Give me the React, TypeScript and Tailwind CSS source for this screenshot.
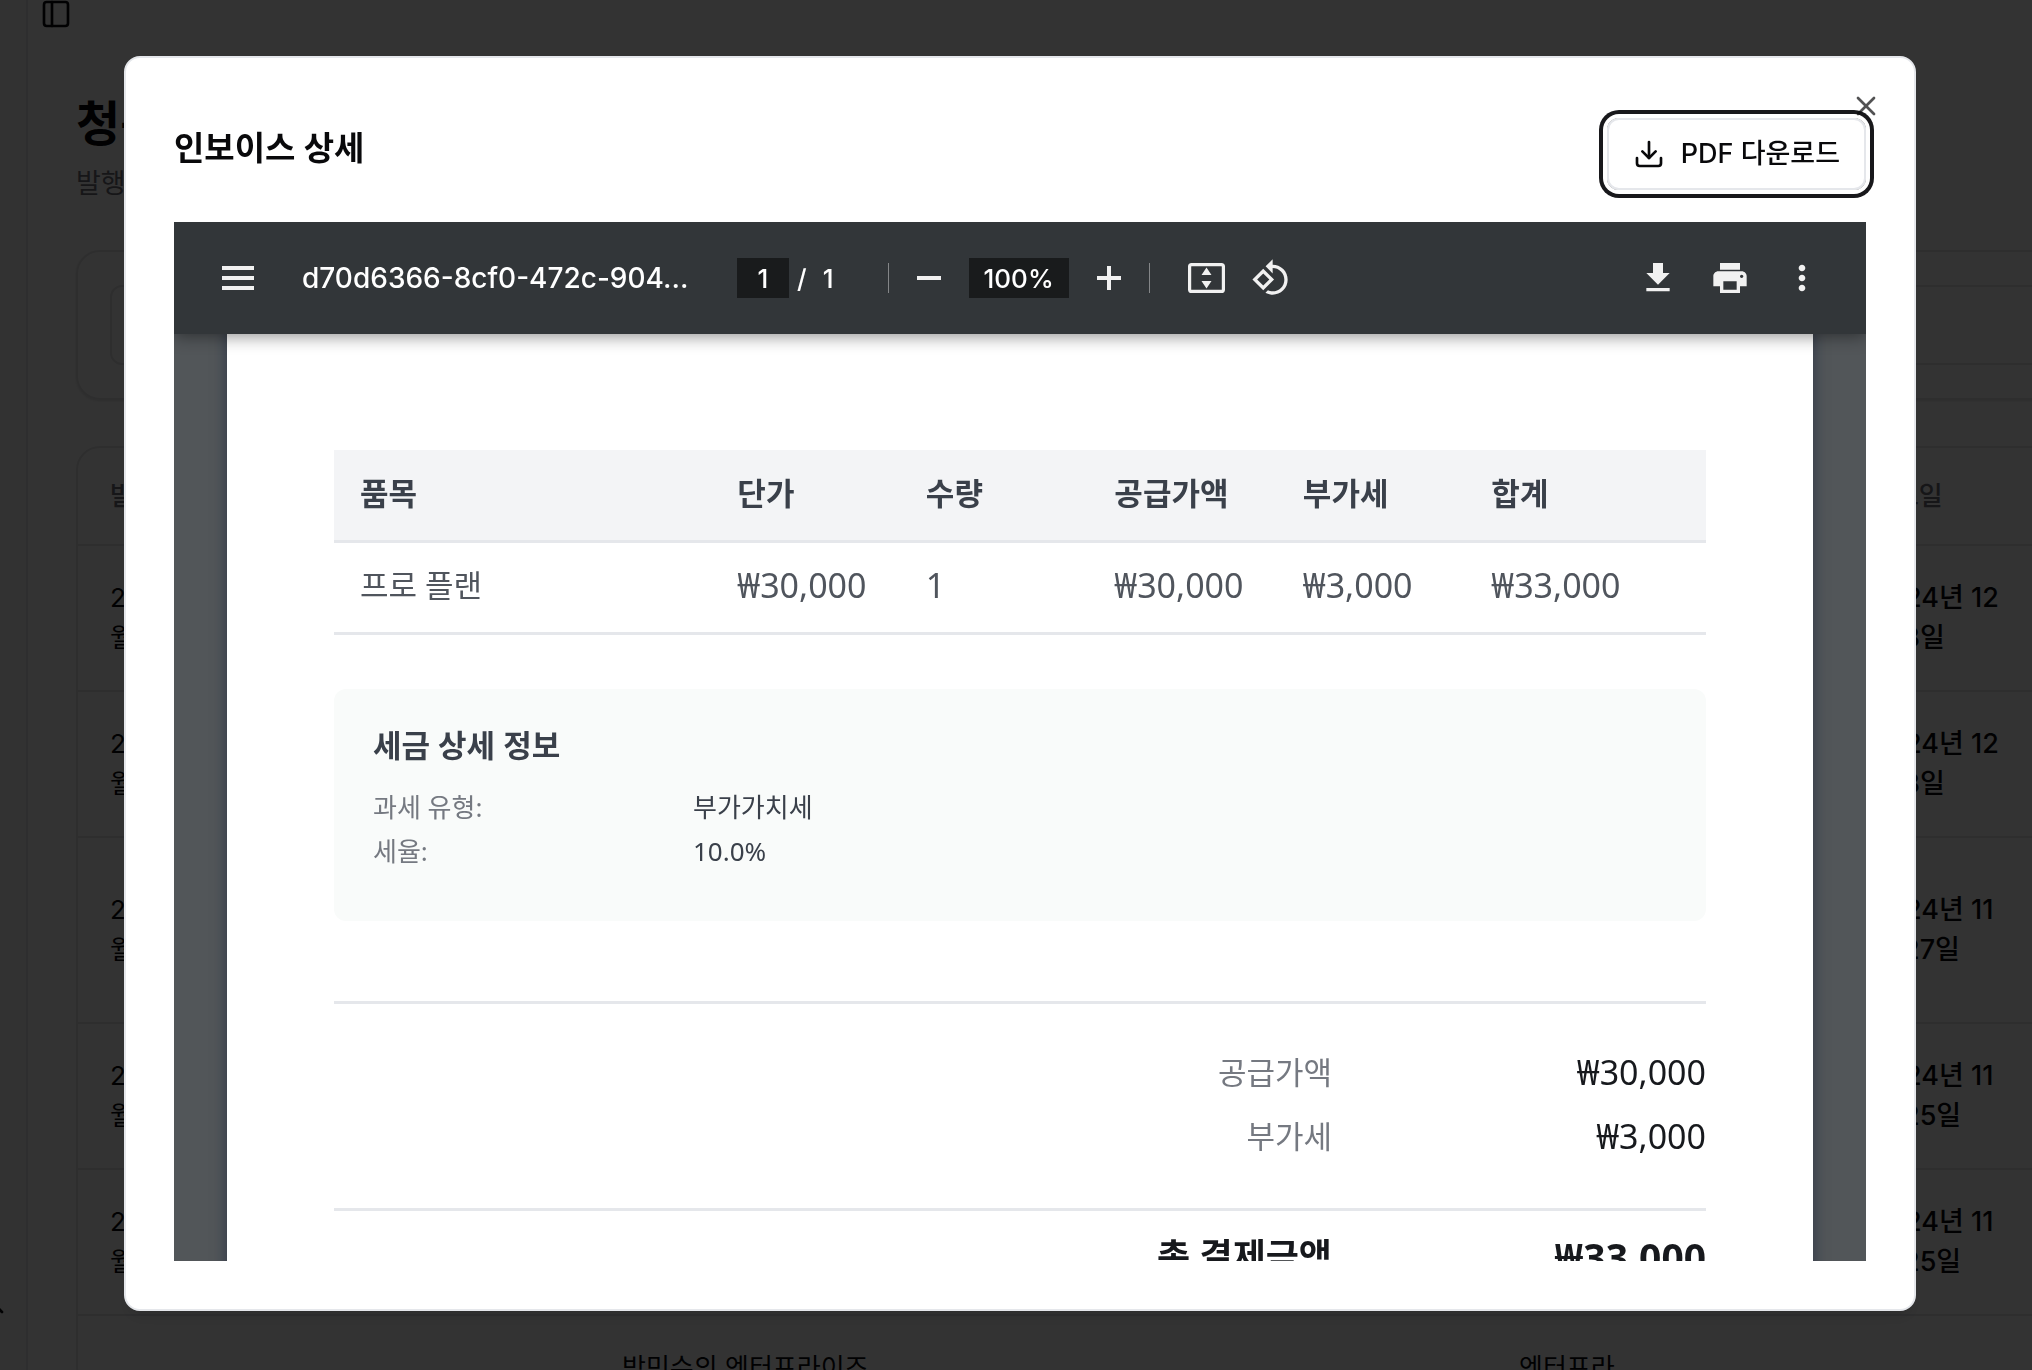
import { useState } from "react";
import { ChevronUp, Download, PanelLeft, X } from "lucide-react";

interface InvoiceRow {
  issuedAt: string;
  dueAt: string;
  tall?: boolean;
}

const invoices: InvoiceRow[] = [
  { issuedAt: "2024년 12월 3일", dueAt: "2024년 12월 3일" },
  { issuedAt: "2024년 12월 3일", dueAt: "2024년 12월 3일" },
  { issuedAt: "2024년 11월 27일", dueAt: "2024년 11월 27일", tall: true },
  { issuedAt: "2024년 11월 25일", dueAt: "2024년 11월 25일" },
  { issuedAt: "2024년 11월 25일", dueAt: "2024년 11월 25일" },
];

const itemColumns = ["단가", "수량", "공급가액", "부가세", "합계"];
const itemValues = ["₩30,000", "1", "₩30,000", "₩3,000", "₩33,000"];

const taxDetails = [
  { label: "과세 유형:", value: "부가가치세" },
  { label: "세율:", value: "10.0%" },
];

const totals = [
  { label: "공급가액", value: "₩30,000" },
  { label: "부가세", value: "₩3,000" },
];

function BillingPage() {
  return (
    <div className="flex h-screen overflow-hidden bg-white font-['Inter','Noto_Sans_CJK_KR',sans-serif] text-zinc-950">
      <aside className="flex w-7 shrink-0 items-end justify-end overflow-hidden border-r-2 border-gray-200 bg-zinc-50 pr-4 pb-[46px]">
        <ChevronUp className="size-8 shrink-0" />
      </aside>
      <main className="min-w-0 flex-1">
        <header className="flex h-7 items-center pl-3">
          <button type="button" aria-label="사이드바 열기">
            <PanelLeft className="size-8" />
          </button>
        </header>

        <div className="-mr-20 pt-[60px] pl-12">
          <h1 className="text-[48px] leading-[72px] font-bold">청구서</h1>
          <p className="mt-1 text-[27px] leading-10 text-zinc-500">발행된 청구서</p>

          <div className="mt-[46px] rounded-3xl border-2 border-zinc-200 px-8 py-[33px] shadow-sm">
            <input
              type="text"
              aria-label="청구서 검색"
              className="block h-20 w-full rounded-xl border-2 border-zinc-200"
            />
          </div>

          <div className="mt-[46px] overflow-hidden rounded-3xl border-2 border-zinc-200">
            <table className="w-full table-fixed text-left text-[26px] leading-10">
              <thead>
                <tr className="h-[97px] border-b-2 border-zinc-200 text-zinc-500">
                  <th className="w-[200px] px-8 font-medium">발행일</th>
                  <th className="w-[312px]" />
                  <th />
                  <th className="w-[352px]" />
                  <th className="w-[271px] pr-27 pl-8 font-medium">만료일</th>
                </tr>
              </thead>
              <tbody>
                {invoices.map((row, idx) => (
                  <tr
                    key={idx}
                    className={`border-b-2 border-zinc-200 ${row.tall ? "h-[186px]" : "h-[146px]"}`}
                  >
                    <td className="px-8">{row.issuedAt}</td>
                    <td />
                    <td />
                    <td />
                    <td className="pr-27 pl-8 text-[27px] font-medium">{row.dueAt}</td>
                  </tr>
                ))}
                <tr className="align-top">
                  <td />
                  <td />
                  <td className="px-8 pt-8">박민수의 엔터프라이즈</td>
                  <td className="px-8 pt-8">엔터프라</td>
                  <td />
                </tr>
              </tbody>
            </table>
          </div>
        </div>
      </main>
    </div>
  );
}

function ViewerToolbar() {
  const [page, setPage] = useState("1");
  const [zoom, setZoom] = useState("100%");

  return (
    <div className="relative z-10 flex h-28 shrink-0 items-center bg-[#323639] pr-11 pl-12 font-['Inter',sans-serif] text-[26px] font-medium text-[#f1f1f1] shadow-[0_2px_16px_rgba(0,0,0,0.45)]">
      <button type="button" aria-label="메뉴">
        <svg width="32" height="24" viewBox="0 0 32 24" fill="currentColor">
          <path d="M0 0h32v4H0zM0 10h32v4H0zM0 20h32v4H0z" />
        </svg>
      </button>
      <span className="ml-12 w-[435px] shrink-0 text-[28px] whitespace-nowrap text-white">
        d70d6366-8cf0-472c-904...
      </span>

      <input
        aria-label="페이지"
        value={page}
        onChange={(e) => setPage(e.target.value)}
        className="h-10 w-[52px] bg-[#191b1c] text-center text-white"
      />
      <span className="ml-2 text-white">/</span>
      <span className="ml-4 w-[65px] text-white">1</span>

      <div className="h-[30px] w-px bg-white/40" />
      <button type="button" aria-label="축소" className="ml-7">
        <svg width="24" height="24" viewBox="0 0 24 24" fill="currentColor">
          <path d="M0 10h24v4H0z" />
        </svg>
      </button>
      <input
        aria-label="확대 비율"
        value={zoom}
        onChange={(e) => setZoom(e.target.value)}
        className="ml-7 h-10 w-[100px] bg-[#191b1c] text-center text-white"
      />
      <button type="button" aria-label="확대" className="ml-7">
        <svg width="24" height="24" viewBox="0 0 24 24" fill="currentColor">
          <path d="M10 0h4v10h10v4H14v10h-4V14H0v-4h10z" />
        </svg>
      </button>
      <div className="ml-7 h-[30px] w-px bg-white/40" />

      <button type="button" aria-label="페이지에 맞춤" className="ml-[38px]">
        <svg width="37" height="30" viewBox="0 0 37 30">
          <rect x="1.6" y="1.6" width="33.8" height="26.8" rx="2" fill="none" stroke="currentColor" strokeWidth="3.2" />
          <path d="M18.5 4.5l5 7.5h-10zM18.5 25.5l5-7.5h-10z" fill="currentColor" />
        </svg>
      </button>
      <button type="button" aria-label="시계 반대 방향으로 회전" className="ml-[26px]">
        <svg width="40" height="40" viewBox="0 0 24 24" fill="currentColor">
          <path d="M7.34 6.41L.86 12.9l6.49 6.48 6.49-6.48-6.5-6.49zM3.69 12.9l3.66-3.66L11 12.9l-3.66 3.66-3.65-3.66zm15.67-6.26C17.61 4.88 15.3 4 13 4V.76L8.76 5 13 9.24V6c1.79 0 3.58.68 4.95 2.05 2.73 2.73 2.73 7.17 0 9.9C16.58 19.32 14.79 20 13 20c-.97 0-1.94-.21-2.84-.61l-1.49 1.49C10.02 21.62 11.51 22 13 22c2.3 0 4.61-.88 6.36-2.64 3.52-3.51 3.52-9.21 0-12.72z" />
        </svg>
      </button>

      <div className="ml-auto flex items-center gap-8">
        <button type="button" aria-label="다운로드">
          <svg width="40" height="40" viewBox="0 0 24 24" fill="currentColor">
            <path d="M19 9h-4V3H9v6H5l7 7 7-7zM5 18v2h14v-2H5z" />
          </svg>
        </button>
        <button type="button" aria-label="인쇄">
          <svg width="40" height="40" viewBox="0 0 24 24" fill="currentColor">
            <path d="M19 8H5c-1.66 0-3 1.34-3 3v6h4v4h12v-4h4v-6c0-1.66-1.34-3-3-3zm-3 11H8v-5h8v5zm3-7c-.55 0-1-.45-1-1s.45-1 1-1 1 .45 1 1-.45 1-1 1zm-1-9H6v4h12V3z" />
          </svg>
        </button>
        <button type="button" aria-label="더보기">
          <svg width="40" height="40" viewBox="0 0 24 24" fill="currentColor">
            <path d="M12 8c1.1 0 2-.9 2-2s-.9-2-2-2-2 .9-2 2 .9 2 2 2zm0 2c-1.1 0-2 .9-2 2s.9 2 2 2 2-.9 2-2-.9-2-2-2zm0 6c-1.1 0-2 .9-2 2s.9 2 2 2 2-.9 2-2-.9-2-2-2z" />
          </svg>
        </button>
      </div>
    </div>
  );
}

function InvoiceDocument() {
  return (
    <div className="mx-[53px] bg-white px-[107px] pt-[116px] font-['Noto_Sans','Noto_Sans_CJK_KR',sans-serif] shadow-[0_0_10px_4px_#3b424e]">
      <table className="w-full table-fixed text-left text-[31px] leading-[48px]">
        <thead>
          <tr className="h-[91px] border-b-3 border-gray-200 bg-gray-100 text-[#3a404a]">
            <th className="w-[29.4%] pb-1 pl-[26px] font-bold">품목</th>
            {itemColumns.map((name) => (
              <th key={name} className="w-[13.74%] pb-1 font-bold last:w-auto">
                {name}
              </th>
            ))}
          </tr>
        </thead>
        <tbody>
          <tr className="h-[92px] border-b-3 border-gray-200 text-[#50555d]">
            <td className="pb-1 pl-[26px]">프로 플랜</td>
            {itemValues.map((value, idx) => (
              <td key={idx} className="pb-1 text-[34px]">
                {value}
              </td>
            ))}
          </tr>
        </tbody>
      </table>

      <section className="mt-[54px] rounded-xl bg-[#f9fbfa] px-[39px] pt-8 pb-12">
        <h3 className="text-[31px] leading-[48px] font-bold text-[#3a404a]">세금 상세 정보</h3>
        <dl className="mt-4 text-[26px] leading-[44px]">
          {taxDetails.map((item) => (
            <div key={item.label} className="flex">
              <dt className="w-80 text-[#757981]">{item.label}</dt>
              <dd className="text-[#3a404a]">{item.value}</dd>
            </div>
          ))}
        </dl>
      </section>

      <dl className="mt-20 border-t-3 border-gray-200 pt-9 text-right leading-[64px]">
        {totals.map((item) => (
          <div key={item.label} className="flex justify-end">
            <dt className="text-[31px] text-[#757981]">{item.label}</dt>
            <dd className="w-[374px] text-[34px] text-[#17191d]">{item.value}</dd>
          </div>
        ))}
        <div className="mt-10 flex justify-end border-t-3 border-gray-200 pt-[14px] font-bold text-[#17191d]">
          <dt className="text-[36px]">총 결제금액</dt>
          <dd className="w-[374px] text-[39px]">₩33,000</dd>
        </div>
      </dl>
    </div>
  );
}

export default function App() {
  return (
    <>
      <BillingPage />
      <div className="fixed inset-0 flex bg-black/80 pt-14 pr-[116px] pb-[59px] pl-[124px]">
        <div
          role="dialog"
          aria-modal="true"
          aria-labelledby="invoice-title"
          className="relative flex min-w-0 flex-1 flex-col rounded-2xl border-2 border-gray-200 bg-white p-12 font-['Inter','Noto_Sans_CJK_KR',sans-serif] text-zinc-950 shadow-lg"
        >
          <div className="mb-8 flex h-[84px] items-center justify-between">
            <h2 id="invoice-title" className="text-[33px] leading-10 font-semibold">
              인보이스 상세
            </h2>
            <button
              type="button"
              className="flex h-[72px] items-center gap-4 self-end rounded-xl border-2 border-gray-200 px-6 text-[27px] font-medium ring-4 ring-zinc-900 ring-offset-4"
            >
              <Download className="size-8" />
              PDF 다운로드
            </button>
          </div>

          <div className="flex min-h-0 flex-1 flex-col overflow-hidden bg-[#525659]">
            <ViewerToolbar />
            <div className="min-h-0 flex-1 overflow-hidden">
              <InvoiceDocument />
            </div>
          </div>

          <button type="button" aria-label="닫기" className="absolute top-8 right-8 opacity-70">
            <X className="size-8" />
          </button>
        </div>
      </div>
    </>
  );
}
